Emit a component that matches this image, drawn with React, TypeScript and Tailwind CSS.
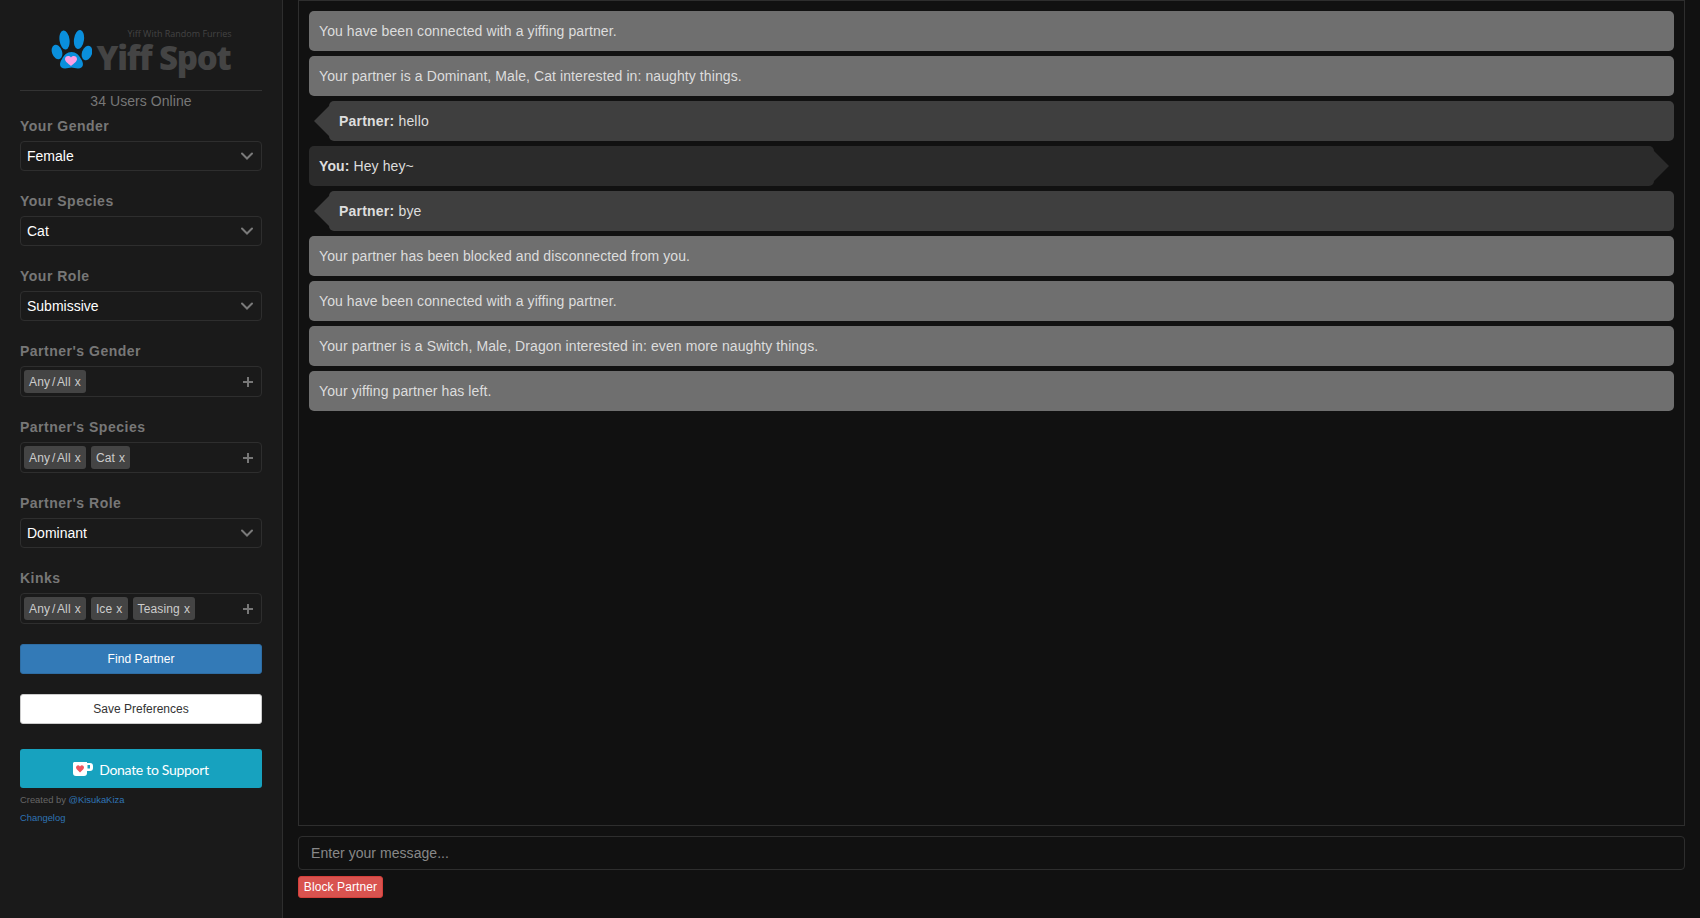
import React from "react";

const Chevron = () => (
  <svg width="12" height="8" viewBox="0 0 12 8" className="mr-2" fill="none" stroke="#7a7a7a" strokeWidth="2" strokeLinecap="round">
    <path d="M1 1.500 L6 6.500 L11 1.500" />
  </svg>
);

const Plus = () => (
  <svg width="10" height="10" viewBox="0 0 10 10" className="mr-2" fill="none" stroke="#777" strokeWidth="2">
    <path d="M5 0 V10 M0 5 H10" />
  </svg>
);

const Label = ({ children }: { children: React.ReactNode }) => (
  <div className="h-[20px] leading-[20px] text-[14px] font-bold tracking-[0.5px] text-[#777] mb-[5px]">{children}</div>
);

const Select = ({ label, value }: { label: string; value: string }) => (
  <div className="mb-[20px]">
    <Label>{label}</Label>
    <div className="h-[30px] border border-[#2e2e2e] rounded-[4px] flex items-center justify-between pl-[6px] text-[14px] text-white">
      <span>{value}</span>
      <Chevron />
    </div>
  </div>
);

const Tags = ({ label, tags }: { label: string; tags: string[] }) => (
  <div className="mb-[20px]">
    <Label>{label}</Label>
    <div className="h-[31px] border border-[#2e2e2e] rounded-[4px] flex items-center justify-between pl-[3px]">
      <div className="flex gap-[5px]">
        {tags.map((t) => (
          <span key={t} className="h-[23px] flex gap-[4px] bg-[#444] rounded-[3px] px-[5px] text-[12px] tracking-[0.15px] [word-spacing:-1.500px] leading-[24px] text-[#ccc] whitespace-nowrap">
            <span>{t}</span>
            <span>x</span>
          </span>
        ))}
      </div>
      <Plus />
    </div>
  </div>
);

const Sys = ({ children }: { children: React.ReactNode }) => (
  <div className="h-[40px] leading-[40px] bg-[#6f6f6f] rounded-[5px] px-[10px] text-[14px] tracking-[0.09px] text-[#ddd] mb-[5px]">{children}</div>
);

const Partner = ({ text }: { text: string }) => (
  <div className="relative h-[40px] leading-[40px] bg-[#3f3f3f] rounded-[5px] ml-[20px] px-[10px] text-[14px] tracking-[0.2px] text-[#ddd] mb-[5px]">
    <span className="absolute left-[-15px] top-[5px] w-0 h-0 border-y-[15px] border-r-[15px] border-y-transparent border-r-[#3f3f3f]" />
    <b>Partner:</b> {text}
  </div>
);

const You = ({ text }: { text: string }) => (
  <div className="relative h-[40px] leading-[40px] bg-[#2b2b2b] rounded-[5px] mr-[20px] px-[10px] text-[14px] tracking-[0.1px] text-[#ddd] mb-[5px]">
    <span className="absolute right-[-15px] top-[5px] w-0 h-0 border-y-[15px] border-l-[15px] border-y-transparent border-l-[#2b2b2b]" />
    <b>You:</b> {text}
  </div>
);

const Paw = () => (
  <svg width="41" height="40" viewBox="0 0 41 40" className="shrink-0">
    <g fill="#0a8fdc">
      <ellipse cx="6" cy="22" rx="5" ry="7.500" transform="rotate(-20 6 22)" />
      <ellipse cx="13.500" cy="10" rx="5" ry="9.500" transform="rotate(-8 13.500 10)" />
      <ellipse cx="28" cy="9.500" rx="5" ry="9.500" transform="rotate(8 28 9.500)" />
      <ellipse cx="36" cy="23" rx="5" ry="7.500" transform="rotate(20 36 23)" />
      <path d="M20.500 22 C25 22 28 25 30 29 C33 33 33 38.500 27 38.500 C24.500 38.500 22.500 37.500 20.500 37.500 C18.500 37.500 16.500 38.500 14 38.500 C8 38.500 8 33 11 29 C13 25 16 22 20.500 22 Z" />
    </g>
    <path d="M20 36 C17 33.500 14 31.500 14 29 C14 26 18 25 20 27.500 C22 25 26 26 26 29 C26 31.500 23 33.500 20 36 Z" fill="#fb9fe6" />
  </svg>
);

const KoFi = () => (
  <svg width="20" height="14" viewBox="0 0 20 14">
    <path d="M1 0 H14 V1 H17 A3 3 0 0 1 20 4 V6 A3 3 0 0 1 17 9 H14 V11 Q14 14 11 14 H3 Q0 14 0 11 V1 Z" fill="#fff" />
    <rect x="14.500" y="3" width="2.500" height="3.500" fill="#17a2bf" />
    <path d="M7 10.500 L3.500 7 Q2.500 5.500 3.500 4 Q5.500 2.500 7 4.500 Q8.500 2.500 10.500 4 Q11.500 5.500 10.500 7 Z" fill="#f0565f" />
  </svg>
);

export default function App() {
  return (
    <div className="h-[918px] flex bg-[#111] overflow-hidden" style={{ fontFamily: '"Liberation Sans", Arial, sans-serif' }}>
      <aside className="w-[283px] shrink-0 bg-[#1a1a1a] border-r border-[#2e2e2e] px-[20px]">
        <div className="h-[91px] border-b border-[#333] pt-[30px] flex justify-center">
          <div className="flex items-start">
            <Paw />
            <div className="flex flex-col items-end ml-[4px] -mt-px" style={{ fontFamily: '"Open Sans", sans-serif' }}>
              <div className="text-[9px] leading-[10px] text-[#444] mr-[-1px]">Yiff With Random Furries</div>
              <div className="text-[33px] leading-[38px] font-extrabold text-[#444] tracking-[-1.2px]">Yiff Spot</div>
            </div>
          </div>
        </div>
        <div className="h-[20px] leading-[20px] mb-[5px] text-center text-[14px] tracking-[0.06px] text-[#777]">34 Users Online</div>
        <Select label="Your Gender" value="Female" />
        <Select label="Your Species" value="Cat" />
        <Select label="Your Role" value="Submissive" />
        <Tags label="Partner's Gender" tags={["Any / All"]} />
        <Tags label="Partner's Species" tags={["Any / All", "Cat"]} />
        <Select label="Partner's Role" value="Dominant" />
        <Tags label="Kinks" tags={["Any / All", "Ice", "Teasing"]} />
        <div className="h-[30px] bg-[#337ab7] border border-[#2e6da4] rounded-[3px] flex items-center justify-center text-[12px] tracking-[0.08px] text-white mb-[20px]">Find Partner</div>
        <div className="h-[30px] bg-white border border-[#ccc] rounded-[3px] flex items-center justify-center text-[12px] text-[#333] mb-[25px]">Save Preferences</div>
        <div className="h-[39px] bg-[#17a2bf] rounded-[3px] flex items-center justify-center gap-[6px] text-[14px] tracking-[-0.3px] text-white" style={{ fontFamily: 'Lato, sans-serif' }}>
          <KoFi />
          <span className="pt-[2px]">Donate to Support</span>
        </div>
        <div className="mt-[3px] text-[9.400px] leading-[18px] text-[#666]">
          <div>Created by <span className="text-[#2f74b5]">@KisukaKiza</span></div>
          <div className="text-[#2f74b5]">Changelog</div>
        </div>
      </aside>
      <main className="flex-1 px-[15px] flex flex-col">
        <div className="h-[826px] border border-[#2e2e2e] p-[10px]">
          <Sys>You have been connected with a yiffing partner.</Sys>
          <Sys>Your partner is a Dominant, Male, Cat interested in: naughty things.</Sys>
          <Partner text="hello" />
          <You text="Hey hey~" />
          <Partner text="bye" />
          <Sys>Your partner has been blocked and disconnected from you.</Sys>
          <Sys>You have been connected with a yiffing partner.</Sys>
          <Sys>Your partner is a Switch, Male, Dragon interested in: even more naughty things.</Sys>
          <Sys>Your yiffing partner has left.</Sys>
        </div>
        <div className="mt-[10px] h-[34px] border border-[#2e2e2e] rounded-[4px] flex items-center px-[12px] text-[14px] tracking-[0.05px] text-[#888]">Enter your message...</div>
        <div className="mt-[6px] h-[22px] w-[85px] bg-[#d9534f] border border-[#d43f3a] rounded-[3px] flex items-center justify-center text-[12px] tracking-[0.1px] text-white">Block Partner</div>
      </main>
    </div>
  );
}
